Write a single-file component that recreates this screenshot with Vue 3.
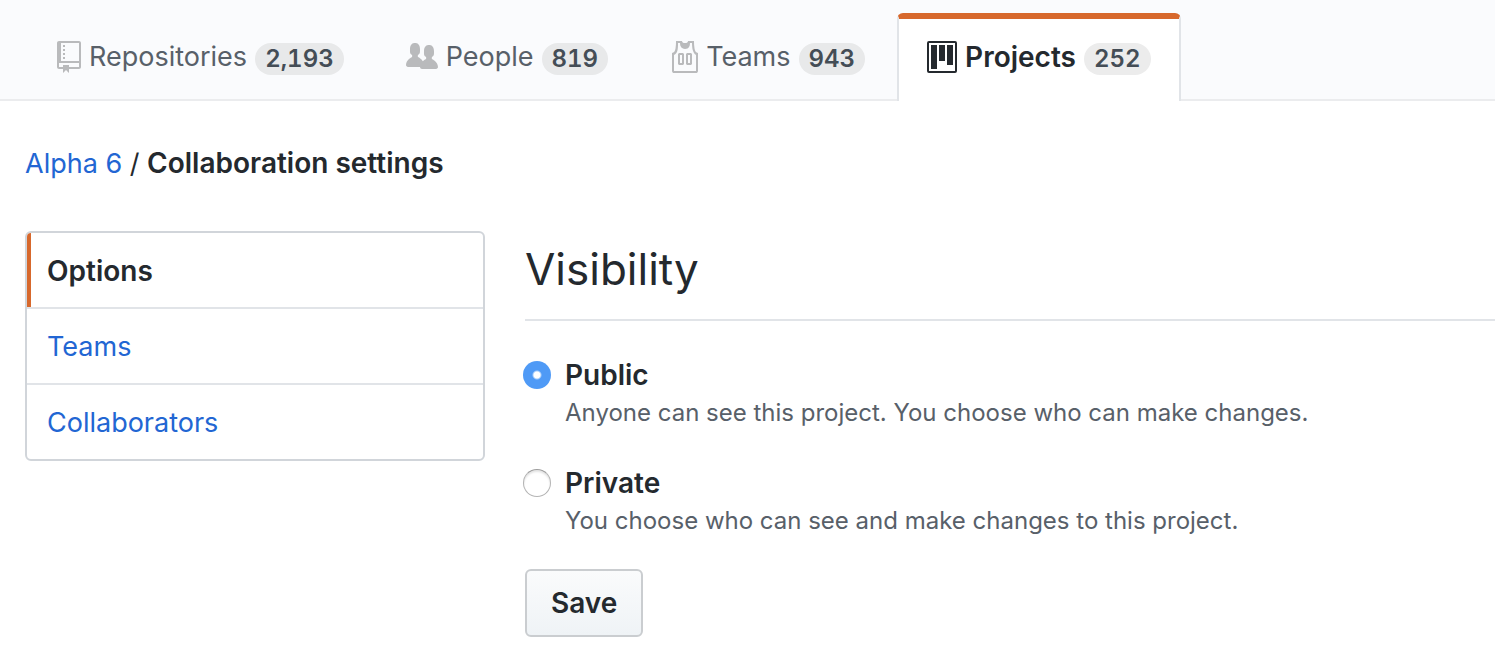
<script setup>
import { ref } from 'vue'

const tabs = [
  {
    name: 'Repositories', count: '2,193', width: 24, box: '0 0 12 16',
    path: 'M4 9H3V8h1v1zm0-3H3v1h1V6zm0-2H3v1h1V4zm0-2H3v1h1V2zm8-1v12c0 .55-.45 1-1 1H6v2l-1.500-1.500L3 16v-2H1c-.55 0-1-.45-1-1V1c0-.55.45-1 1-1h10c.55 0 1 .45 1 1zm-1 10H1v2h2v-1h3v1h5v-2zm0-10H2v9h9V1z',
  },
  {
    name: 'People', count: '819', width: 32, box: '0 0 16 16',
    path: 'M16 12.999c0 .439-.45 1-1 1H7.995c-.539 0-.994-.447-.995-.999H1c-.54 0-1-.561-1-1 0-2.634 3-4 3-4s.229-.409 0-1c-.841-.621-1.058-.59-1-3 .058-2.419 1.367-3 2.5-3s2.442.58 2.5 3c.058 2.41-.159 2.379-1 3-.229.59 0 1 0 1s1.549.711 2.42 2.088C9.196 9.369 10 8.999 10 8.999s.229-.409 0-1c-.841-.62-1.058-.59-1-3 .058-2.419 1.367-3 2.5-3s2.437.581 2.495 3c.059 2.41-.158 2.38-1 3-.229.59 0 1 0 1s3.005 1.366 3.005 4',
  },
  {
    name: 'Teams', count: '943', width: 28, box: '0 0 14 16',
    path: 'M4.5 6l-.5.5v5l.5.5h2l.5-.5v-5L6.5 6h-2zM6 11H5V7h1v4zm6.27-7.25C12.05 2.37 11.96 1.12 12 0H9.02c0 .27-.13.48-.39.69-.25.2-.63.3-1.13.3-.5 0-.88-.09-1.13-.3-.23-.2-.36-.42-.36-.69H3c.05 1.13-.03 2.38-.25 3.75C2.55 5.13 1.95 5.88 1 6v9c.02.27.11.48.31.69.2.21.42.3.69.31h11c.27-.02.48-.11.69-.31.21-.2.3-.42.31-.69V6c-.95-.13-1.53-.88-1.75-2.25h.02zM13 15H2V7c.89-.5 1.48-1.25 1.72-2.25S4.03 2.5 4 1h1c-.02.78.16 1.47.52 2.06.36.58 1.02.89 2 .94.98-.02 1.64-.33 2-.94.36-.59.5-1.28.48-2.06h1c.02 1.42.13 2.55.33 3.38.2.81.69 2 1.67 2.63v8V15zM8.5 6l-.5.5v5l.5.5h2l.5-.5v-5l-.5-.5h-2zm1.500 5H9V7h1v4z',
  },
  {
    name: 'Projects', count: '252', width: 30, box: '0 0 15 16', active: true,
    path: 'M10 12h3V2h-3v10zm-4-2h3V2H6v8zm-4 4h3V2H2v12zm-1 1h13V1H1v14zM14 0H1a1 1 0 0 0-1 1v14a1 1 0 0 0 1 1h13a1 1 0 0 0 1-1V1a1 1 0 0 0-1-1z',
  },
]

const menu = ['Options', 'Teams', 'Collaborators']

const choices = [
  { id: 'public', name: 'Public', note: 'Anyone can see this project. You choose who can make changes.' },
  { id: 'private', name: 'Private', note: 'You choose who can see and make changes to this project.' },
]
const visibility = ref('public')
</script>

<template>
  <div class="page">
    <header class="tabbar">
      <nav class="tabs" aria-label="Organization">
        <a v-for="t in tabs" :key="t.name" href="#" class="tab" :class="{ active: t.active }">
          <svg class="icon" :width="t.width" height="32" :viewBox="t.box" aria-hidden="true">
            <path fill-rule="evenodd" :d="t.path" />
          </svg>
          <span class="tab-name">{{ t.name }}</span>
          <span class="counter">{{ t.count }}</span>
        </a>
      </nav>
    </header>

    <div class="content">
      <h1 class="crumbs">
        <a href="#">Alpha 6</a> <span class="slash">/</span> <strong>Collaboration settings</strong>
      </h1>

      <div class="columns">
        <nav class="menu" aria-label="Settings">
          <a v-for="(m, i) in menu" :key="m" href="#" class="menu-item" :class="{ selected: i === 0 }">{{ m }}</a>
        </nav>

        <main class="main">
          <h2 class="heading">Visibility</h2>
          <form class="form" @submit.prevent>
            <div v-for="c in choices" :key="c.id" class="choice">
              <input :id="c.id" v-model="visibility" class="radio" type="radio" name="visibility" :value="c.id" :aria-describedby="c.id + '-note'" />
              <div class="choice-text">
                <label class="choice-name" :for="c.id">{{ c.name }}</label>
                <p :id="c.id + '-note'" class="note">{{ c.note }}</p>
              </div>
            </div>
            <button class="save" type="submit">Save</button>
          </form>
        </main>
      </div>
    </div>
  </div>
</template>

<style>
body {
  margin: 0;
  background: #fff;
}
</style>

<style scoped>
.page {
  font-family: Inter, "Liberation Sans", sans-serif;
  font-size: 27px;
  line-height: 42px;
  color: #24292e;
}
.page *,
.page *::before {
  box-sizing: border-box;
}
a {
  color: #2266d3;
  text-decoration: none;
}
.tabbar {
  padding: 13px 27px 0;
  background: #fafbfd;
  border-bottom: 2px solid #ebecee;
}
.tabs {
  display: flex;
  gap: 2px;
  margin-bottom: -2px;
}
.tab {
  display: flex;
  align-items: center;
  height: 88px;
  padding: 0 28px 6px;
  border: 2px solid transparent;
  border-top-width: 6px;
  border-bottom: 0;
  color: #586069;
  white-space: nowrap;
}
.tab.active {
  color: #24292e;
  font-size: 28px;
  font-weight: 600;
  background: #fff;
  border-color: #d7682c #e1e4e8 transparent;
  border-radius: 6px 6px 0 0;
}
.icon {
  flex: none;
  margin-right: 8px;
  fill: #b9babc;
}
.active .icon {
  fill: #24292e;
}
.counter {
  margin: 4px 0 0 8px;
  padding: 0 10px;
  border-radius: 16px;
  background: #e8e9ea;
  color: #444d56;
  font-size: 24px;
  line-height: 32px;
  font-weight: 600;
  font-variant-numeric: tabular-nums;
}
.active .counter {
  background: #ececec;
}
.content {
  padding: 41px 0 20px 25px;
}
.crumbs {
  margin: 0;
  font-size: 27px;
  line-height: 42px;
  font-weight: 400;
}
.crumbs strong {
  font-size: 28px;
  font-weight: 600;
}
.columns {
  display: flex;
  align-items: flex-start;
  gap: 40px;
  margin-top: 46px;
}
.menu {
  flex: 0 0 460px;
  border: 2px solid #d1d5da;
  border-radius: 6px;
  overflow: hidden;
}
.menu-item {
  display: block;
  padding: 17px 20px 15px;
  border-bottom: 2px solid #e1e4e8;
}
.menu-item:last-child {
  border-bottom: 0;
}
.menu-item.selected {
  position: relative;
  color: #24292e;
  font-size: 28px;
  font-weight: 600;
}
.menu-item.selected::before {
  content: "";
  position: absolute;
  top: 0;
  bottom: 0;
  left: 0;
  width: 4px;
  background: #d7682c;
}
.main {
  flex: 1;
  min-width: 0;
}
.heading {
  margin: 0;
  padding: 4px 0 16px;
  border-bottom: 2px solid #e1e4e8;
  font-size: 44px;
  line-height: 68px;
  font-weight: 400;
}
.form {
  padding-top: 34px;
}
.choice {
  display: flex;
  gap: 14px;
  margin-left: -2px;
}
.choice + .choice {
  margin-top: 32px;
}
.radio {
  appearance: none;
  flex: none;
  width: 28px;
  height: 28px;
  margin: 6px 0 0;
  border: 1px solid #b4b4b4;
  border-top-color: #9c9c9c;
  border-radius: 50%;
  background: #fff;
  box-shadow: inset 0 2px 2px #e4e4e4;
}
.radio:checked {
  border: 0;
  background: radial-gradient(circle, #fff 3px, #4f9af6 5px);
  box-shadow: none;
}
.choice-text {
  display: flex;
  flex-direction: column;
}
.choice-name {
  font-size: 28px;
  line-height: 40px;
  font-weight: 600;
}
.note {
  margin: 0;
  color: #586069;
  font-size: 24px;
  line-height: 36px;
}
.save {
  display: block;
  margin-top: 30px;
  padding: 12px 24px;
  border: 2px solid #cacdd0;
  border-radius: 6px;
  background: linear-gradient(#fafbfc, #eff3f6);
  color: #24292e;
  font-family: inherit;
  font-size: 28px;
  font-weight: 600;
  line-height: 40px;
}
</style>
